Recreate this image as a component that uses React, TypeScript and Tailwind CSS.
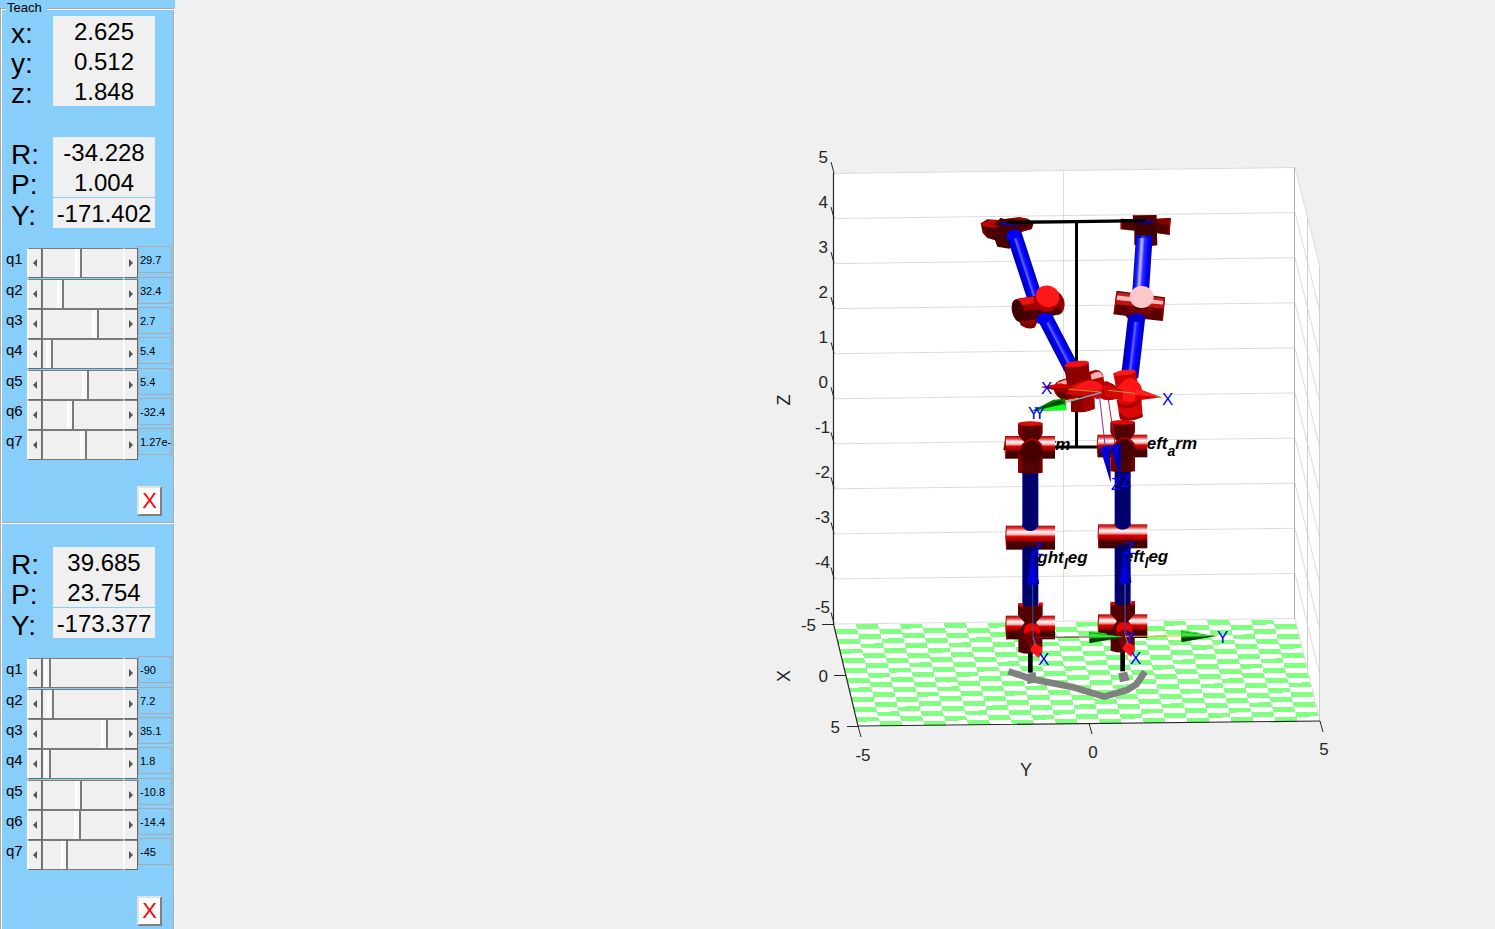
import React, { useState } from "react";

type Reading = { label: string; value: string; gap?: boolean };
type Joint = { name: string; thumb: number; value: string; gap?: boolean };

const POSITION: Reading[] = [
  { label: "x:", value: "2.625" },
  { label: "y:", value: "0.512" },
  { label: "z:", value: "1.848" },
];
const ORIENTATION_A: Reading[] = [
  { label: "R:", value: "-34.228" },
  { label: "P:", value: "1.004" },
  { label: "Y:", value: "-171.402", gap: true },
];
const ORIENTATION_B: Reading[] = [
  { label: "R:", value: "39.685" },
  { label: "P:", value: "23.754" },
  { label: "Y:", value: "-173.377", gap: true },
];
const JOINTS_A: Joint[] = [
  { name: "q1", thumb: 32, value: "29.7" },
  { name: "q2", thumb: 14, value: "32.4", gap: true },
  { name: "q3", thumb: 49, value: "2.7" },
  { name: "q4", thumb: 3, value: "5.4" },
  { name: "q5", thumb: 39, value: "5.4", gap: true },
  { name: "q6", thumb: 24, value: "-32.4" },
  { name: "q7", thumb: 37, value: "1.27e-" },
];
const JOINTS_B: Joint[] = [
  { name: "q1", thumb: 1, value: "-90" },
  { name: "q2", thumb: 4, value: "7.2", gap: true },
  { name: "q3", thumb: 58, value: "35.1" },
  { name: "q4", thumb: 1, value: "1.8" },
  { name: "q5", thumb: 32, value: "-10.8", gap: true },
  { name: "q6", thumb: 31, value: "-14.4" },
  { name: "q7", thumb: 18, value: "-45" },
];

function Readings({ rows, id }: { rows: Reading[]; id: string }) {
  return (
    <div className="pl-[10px]">
      {rows.map((r) => (
        <div key={r.label} className={r.gap ? "flex h-[31px] pt-px" : "flex h-[30px]"}>
          <label htmlFor={id + r.label} className="w-[42px] pt-[3px] text-[28px] leading-[30px]">
            {r.label}
          </label>
          <output
            id={id + r.label}
            className="h-[30px] w-[102px] bg-[#f0f0f0] text-center text-[24px] leading-[32px] whitespace-nowrap"
          >
            {r.value}
          </output>
        </div>
      ))}
    </div>
  );
}

const STEP_BUTTON =
  "flex h-full w-[15px] items-center justify-center border-t border-r border-b border-l-2 border-t-[#808080] border-r-[#696969] border-b-[#696969] border-l-[#fbfbfb] bg-[#f0f0f0] pr-px pb-px";

function JointRow({ joint, id }: { joint: Joint; id: string }) {
  const [pos, setPos] = useState(joint.thumb);
  return (
    <div className={joint.gap ? "flex h-[31px] items-start pt-px" : "flex h-[30px] items-start"}>
      <label htmlFor={id} className="w-[26px] pl-[5px] text-[15px] leading-[26px]">
        {joint.name}
      </label>
      <div className="mt-0.5 flex h-[30px] w-[111px] shrink-0 bg-[#f0f0f0]">
        <button type="button" aria-label={joint.name + " down"} className={STEP_BUTTON} onClick={() => setPos(Math.max(0, pos - 1))}>
          <svg viewBox="0 0 4 8" className="h-2 w-1 shrink-0" aria-hidden="true">
            <path d="M4 0v8L0 4z" fill="#555" />
          </svg>
        </button>
        <input
          id={id}
          type="range"
          min={0}
          max={73}
          value={pos}
          onChange={(e) => setPos(Number(e.target.value))}
          className="m-0 h-[30px] min-w-0 flex-1 appearance-none border-y border-l border-[#7a7a7a] bg-[#f0f0f0] outline-none [&::-webkit-slider-thumb]:h-7 [&::-webkit-slider-thumb]:w-[7px] [&::-webkit-slider-thumb]:appearance-none [&::-webkit-slider-thumb]:border-r-2 [&::-webkit-slider-thumb]:border-l-2 [&::-webkit-slider-thumb]:border-l-white [&::-webkit-slider-thumb]:border-r-[#7a7a7a] [&::-webkit-slider-thumb]:bg-[#f7f7f7]"
        />
        <button type="button" aria-label={joint.name + " up"} className={STEP_BUTTON} onClick={() => setPos(Math.min(73, pos + 1))}>
          <svg viewBox="0 0 4 8" className="h-2 w-1 shrink-0" aria-hidden="true">
            <path d="M0 0v8l4-4z" fill="#555" />
          </svg>
        </button>
      </div>
      <input
        type="text"
        aria-label={joint.name + " value"}
        defaultValue={joint.value}
        className="h-[27px] w-[34px] border border-[#ababab] bg-transparent pl-px text-[11px] outline-none"
      />
    </div>
  );
}

function Joints({ joints, id }: { joints: Joint[]; id: string }) {
  return (
    <div>
      {joints.map((j) => (
        <JointRow key={j.name} joint={j} id={id + j.name} />
      ))}
    </div>
  );
}

function CloseButton() {
  return (
    <button
      type="button"
      className="ml-[136px] flex h-[30px] w-[25px] items-center justify-center border-2 border-t-[#e3e3e3] border-r-[#808080] border-b-[#808080] border-l-[#e3e3e3] bg-white text-[22px] leading-none text-[#f00]"
    >
      X
    </button>
  );
}

/* ---------- 3D plot ---------- */

const N = 21;
function floorPoint(u: number, v: number): string {
  const x = 834 + 461 * u + 24.5 * v;
  const y = 624.5 - 5.2 * u + 102 * v;
  return x.toFixed(1) + " " + y.toFixed(1);
}
function buildTiles(): string {
  let d = "";
  for (let r = 0; r < N; r++) {
    for (let c = 0; c < N; c++) {
      if ((r + c) % 2 === 0) continue;
      const [u0, u1, v0, v1] = [c / N, (c + 1) / N, r / N, (r + 1) / N];
      d += `M${floorPoint(u0, v0)}L${floorPoint(u1, v0)}L${floorPoint(u1, v1)}L${floorPoint(u0, v1)}Z`;
    }
  }
  return d;
}
const TILES = buildTiles();
const LEVELS = [5, 4, 3, 2, 1, 0, -1, -2, -3, -4, -5];

type TubeProps = { x1: number; y1: number; x2: number; y2: number; w: number; fill: string };
function Tube({ x1, y1, x2, y2, w, fill }: TubeProps) {
  const len = Math.hypot(x2 - x1, y2 - y1);
  const angle = (Math.atan2(y2 - y1, x2 - x1) * 180) / Math.PI;
  return <rect x={0} y={-w / 2} width={len} height={w} fill={fill} transform={`translate(${x1} ${y1}) rotate(${angle})`} />;
}

function Stops({ id, stops }: { id: string; stops: [number, string][] }) {
  return (
    <linearGradient id={id} x1="0" y1="0" x2="0" y2="1">
      {stops.map(([o, c]) => (
        <stop key={o} offset={o} stopColor={c} />
      ))}
    </linearGradient>
  );
}

function Leg({ dx, dy }: { dx: number; dy: number }) {
  return (
    <g transform={`translate(${dx} ${dy})`}>
      <path d="M121 455V518" stroke="#000" strokeWidth="14" />
      {/* shin and thigh */}
      <Tube x1={121} y1={130} x2={121} y2={330} w={48} fill="url(#navy)" />
      <Tube x1={121} y1={-85} x2={121} y2={80} w={48} fill="url(#navy)" />
      {/* hip */}
      <rect x="47" y="-192" width="148" height="68" fill="url(#redBar)" />
      <path d="M47-192q-5 34 0 68" stroke="#b00000" strokeWidth="3" fill="none" />
      <path d="M84-230V-200Q90-182 102-176V-160H140V-176Q152-182 158-200V-230Z" fill="url(#hipV)" />
      <path d="M84-138V-82Q121-76 158-82V-138Z" fill="url(#hipV)" />
      <ellipse cx="121" cy="-229" rx="37" ry="7" fill="#e00808" />
      <path d="M125-180Q92-174 92-145Q92-112 125-110Q158-112 158-145Q158-174 125-180Z" fill="#460000" />
      <path d="M93-158Q105-180 128-182Q150-178 157-158" stroke="#a80000" strokeWidth="5" fill="none" />
      {/* knee */}
      <rect x="48" y="77" width="147" height="72" fill="url(#redBar)" />
      <path d="M49 78q-4 35 1 70" stroke="#b00000" strokeWidth="3" fill="none" />
      <path d="M97 74h48v5q-8 14-24 14t-24-14z" fill="url(#navyFlat)" />
      <path d="M97 151q4-11 24-13t24 13z" fill="#00005e" />
      {/* ankle */}
      <rect x="48" y="347" width="147" height="71" fill="url(#redBar)" />
      <path d="M49 348q-4 35 1 70" stroke="#b00000" strokeWidth="3" fill="none" />
      <path d="M84 314Q121 325 158 312V345L138 368Q158 390 157 420V454Q121 468 85 456V420Q86 388 104 368L84 345Z" fill="#500000" />
      <path d="M84 309l14 1v12l-12-4zM146 308l12-1v10l-12 3z" fill="#e00000" />
      <path d="M102 392Q104 368 125 370Q148 370 151 392L148 402Q125 384 104 404Z" fill="#f00000" />
      <path d="M104 404Q125 385 148 402L154 438 122 448Q104 425 104 404Z" fill="#720000" />
      <path d="M120 450L132 430 155 440 157 458 145 474Z" fill="#ff1515" />
      <path d="M129 412L128 250" stroke="#20609c" strokeWidth="3" />
      <path d="M129 412L137 435" stroke="#38a0ce" strokeWidth="3" />
      <path d="M127 145L111 253Q129 258 147 251Z" fill="#0000dc" />
      <path d="M127 145L147 251 137 255Z" fill="#0000aa" />
    </g>
  );
}

function GreenCone({ dx, dy }: { dx: number; dy: number }) {
  return (
    <g transform={`translate(${dx} ${dy})`}>
      <path d="M297 395L402 411 299 429Z" fill="#10a010" />
      <path d="M298 400L402 411 299 412Z" fill="#42df42" />
      <path d="M298 416L402 411 299 429Z" fill="#003c00" />
      <path d="M298 395L350 402" stroke="#00ff00" strokeWidth="3" />
    </g>
  );
}

function RobotPlot() {
  return (
    <svg viewBox="175 0 1320 929" className="block w-full" role="img" aria-label="Robot pose plot" fontFamily="Liberation Sans, Arial, sans-serif">
      <defs>
        <Stops id="redBar" stops={[[0, "#b00000"], [0.12, "#e04040"], [0.25, "#fff4f4"], [0.36, "#f8c0c0"], [0.46, "#d80000"], [0.62, "#a00000"], [0.68, "#4c0000"], [1, "#3c0000"]]} />
        <Stops id="red" stops={[[0, "#e81010"], [0.4, "#ff1010"], [0.75, "#c80000"], [1, "#780000"]]} />
        <Stops id="blue" stops={[[0, "#0000b0"], [0.25, "#0000ff"], [0.42, "#2020ff"], [0.52, "#6a6aff"], [0.64, "#0000ff"], [1, "#0000a4"]]} />
        <Stops id="blueLit" stops={[[0, "#0000a8"], [0.2, "#0000ff"], [0.45, "#2a2aff"], [0.62, "#c0c0ff"], [0.8, "#2020ff"], [1, "#0000b8"]]} />
        <Stops id="navy" stops={[[0, "#000090"], [0.15, "#000066"], [0.5, "#000070"], [0.9, "#000066"], [1, "#0000a0"]]} />
        <linearGradient id="navyFlat">
          <stop offset="0" stopColor="#000090" />
          <stop offset="0.2" stopColor="#000068" />
          <stop offset="1" stopColor="#000078" />
        </linearGradient>
        <linearGradient id="hipV">
          <stop offset="0" stopColor="#8c0000" />
          <stop offset="0.25" stopColor="#560000" />
          <stop offset="0.8" stopColor="#500000" />
          <stop offset="1" stopColor="#880000" />
        </linearGradient>
      </defs>

      {/* walls and floor */}
      <path d="M834 173.500L1295 167.500 1320 267V721L858 726 834 624Z" fill="#fff" />
      <path d={TILES} fill="#80ff80" shapeRendering="crispEdges" />
      <g stroke="#dcdcdc" fill="none">
        {LEVELS.map((z, i) => (
          <path key={z} d={`M834 ${173.5 + 45.05 * i}L1295 ${167.5 + 45.1 * i}L1320 ${267 + 45.4 * i}`} />
        ))}
        <path d="M1063.500 170V622" />
        <path d="M1307.500 218V670M1319.500 267V721" stroke="#cfcfcf" />
        <path d="M1294.500 167V619" stroke="#b0b0b0" />
      </g>
      <g stroke="#262626" fill="none">
        <path d="M833.500 173V624L858 726 1320 721" strokeWidth="1.200" />
        {LEVELS.map((z, i) => (
          <path key={z} d={`M831 ${162 + 45.05 * i}l3 11`} />
        ))}
        <path d="M822 624.500h12M834 675.500h12M847 726.500h11M858 726l3 11M1089 723l3 11M1320 721l3 11" />
      </g>
      <g fill="#262626" fontSize="17" textAnchor="end">
        {LEVELS.map((z, i) => (
          <text key={z} x={z < 0 ? 830 : 828} y={163 + 45 * i}>{z}</text>
        ))}
        <text x="816" y="631">-5</text>
        <text x="828" y="682">0</text>
        <text x="840" y="733">5</text>
      </g>
      <g fill="#262626" fontSize="17" textAnchor="middle">
        <text x="863" y="761">-5</text>
        <text x="1093" y="758">0</text>
        <text x="1324" y="755">5</text>
        <text x="1026" y="776" fontSize="18">Y</text>
        <text transform="translate(790 676) rotate(-90)" fontSize="18">X</text>
        <text transform="translate(790 400) rotate(-90)" fontSize="18">Z</text>
      </g>

      {/* torso frame and limb names */}
      <path d="M1076.500 222V447M1030 447H1123" stroke="#000" strokeWidth="3" fill="none" />
      <g fontSize="17" fontWeight="bold" fontStyle="italic">
        <text x="1003" y="450">right<tspan dy="7" fontSize="14">a</tspan><tspan dy="-7">rm</tspan></text>
        <text x="1142" y="449">left<tspan dy="7" fontSize="14">a</tspan><tspan dy="-7">rm</tspan></text>
        <text x="1026" y="563">right<tspan dy="6" fontSize="14">l</tspan><tspan dy="-6">eg</tspan></text>
        <text x="1119" y="562">left<tspan dy="6" fontSize="14">l</tspan><tspan dy="-6">eg</tspan></text>
      </g>

      {/* legs */}
      <g transform="translate(990 500) scale(.3333)">
        <path d="M111 522l26-6 2 32-27 4z" fill="#808080" />
        <path d="M385 520l26-5 8 26-29 6z" fill="#808080" />
        <path d="M55 514L125 537 250 562 343 590 412 570 440 552 465 515" stroke="#808080" strokeWidth="20" fill="none" />
        <Leg dx={0} dy={0} />
        <path d="M130 412L300 411" stroke="#7c2034" strokeWidth="3" />
        <Leg dx={277} dy={-4} />
        <path d="M405 408V250" stroke="#643080" strokeWidth="3" />
        <GreenCone dx={0} dy={0} />
        <path d="M405 409L575 408M665 407h18" stroke="#f0b030" strokeWidth="3" />
        <GreenCone dx={276} dy={-3} />
      </g>

      {/* shoulders, upper arms and elbows */}
      <g transform="translate(960 200) scale(.3333)">
        <path d="M62 70L82 58 116 60 121 54 134 57 175 52 205 57 221 70 215 88 180 96 172 132 148 146 112 140 105 121 82 114 68 99Z" fill="#480000" />
        <path d="M62 70L90 60 116 60 97 75 119 77 104 83 68 79Z" fill="#c00505" />
        <path d="M140 57L182 52 205 57 193 61Z" fill="#a00000" />
        <path d="M70 82Q74 104 88 112M182 94L216 82" stroke="#780000" strokeWidth="6" fill="none" />
        <ellipse cx="150" cy="71" rx="30" ry="5" fill="#0000d0" />
        <path d="M482 56L519 58 518 46 590 45V56L632 54 629 105 591 100 592 136 570 139 523 135V92L482 88Z" fill="#500000" />
        <path d="M592 57L632 54 630 76 592 70Z" fill="#850000" />
        <path d="M630 56L627 104M484 57V88" stroke="#a80000" strokeWidth="4" />
        <path d="M520 66H590L586 98Q555 125 528 99Z" fill="#3b0000" />
        <ellipse cx="555" cy="66" rx="26" ry="4" fill="#0000d8" />
        <path d="M141 67L349 65 555 62" stroke="#000" strokeWidth="10" fill="none" />
        <Tube x1={162} y1={102} x2={225} y2={295} w={46} fill="url(#blue)" />
        <path d="M139 110Q142 90 160 88Q178 89 184 96L176 112 141 122Z" fill="#0000f4" />
        <Tube x1={553} y1={108} x2={541} y2={290} w={50} fill="url(#blueLit)" />
        <path d="M530 101Q552 118 576 103V112L530 114Z" fill="#0000cf" />
        {/* right elbow */}
        <path d="M157 310Q162 297 180 295L283 278Q314 280 314 315Q312 338 300 343L238 353 225 382Q204 390 185 374L164 350Z" fill="#a00000" />
        <path d="M166 298L222 291 224 309 172 317Z" fill="#ed1515" />
        <path d="M185 334L305 322 299 343 190 365Z" fill="#480000" />
        <ellipse cx="174" cy="332" rx="18" ry="34" transform="rotate(-12 174 332)" fill="#410000" />
        <path d="M180 366Q204 378 231 363L222 383Q202 390 182 376Z" fill="#790000" />
        <path d="M218 301L242 331Q263 345 292 322L298 282 278 267Z" fill="#a90000" />
        <path d="M284 272Q310 276 312 314L296 325Z" fill="#8c0000" />
        <ellipse cx="263" cy="289" rx="36" ry="32" transform="rotate(20 263 289)" fill="#ff1818" />
        <Tube x1={254} y1={350} x2={338} y2={512} w={46} fill="url(#blue)" />
        <path d="M229 362Q230 343 252 340Q270 340 276 348L262 368 234 371Z" fill="#0000f4" />
        {/* left elbow */}
        <path d="M470 272L615 292 608 363 553 357Q541 372 512 364L496 347 461 343Z" fill="#590000" />
        <path d="M469 276L612 295 611 306 467 289Z" fill="#c02020" />
        <path d="M468 286L611 303 610 315 466 301Z" fill="#f4b8b8" />
        <path d="M467 300L611 314 609 326 465 313Z" fill="#c81010" />
        <path d="M471 277L462 343M613 295L607 361" stroke="#a00000" strokeWidth="4" />
        <path d="M506 318Q535 338 582 320L574 342H505Z" fill="#7a0000" />
        <Tube x1={530} y1={350} x2={509} y2={532} w={52} fill="url(#blue)" />
        <path d="M504 352Q510 340 532 340Q552 342 557 356L550 366H504Z" fill="#0000c8" />
        <ellipse cx="545" cy="291" rx="36" ry="33" fill="#ffc8c8" />
      </g>

      {/* wrists and tool frames */}
      <g transform="translate(1000 340) scale(.3333)">
        <path d="M160 146Q163 124 190 118L288 89Q313 92 312 123L322 132 290 170 195 181Q166 174 160 146Z" fill="#b00000" />
        <path d="M172 128L198 119 206 131 176 138ZM272 104Q290 90 303 98L310 110 275 119Z" fill="#f9b0b0" />
        <path d="M165 144Q188 160 216 144L218 171 190 180Q167 172 165 144Z" fill="#680000" />
        <path d="M193 75L266 68 270 126 201 136Z" fill="#8c0000" />
        <path d="M212 152L282 150 284 206Q250 222 213 215Z" fill="#850000" />
        <path d="M244 156h38l2 50-32 10z" fill="#a80000" />
        <ellipse cx="230" cy="72" rx="37" ry="9" transform="rotate(-7 230 72)" fill="#f01010" />
        <path d="M200 147Q242 119 276 121Q305 127 318 148Q314 170 293 178Q270 164 220 167L198 160Z" fill="#d80505" />
        <path d="M209 148L265 121Q300 123 314 146L290 152Z" fill="#ff1515" />
        <path d="M318 122Q338 130 348 139L355 174Q324 188 300 174L309 136Z" fill="#c00000" />
        <path d="M340 100L408 92 415 150 350 154Z" fill="#c80404" />
        <path d="M350 180L423 160 428 229Q392 248 360 238Z" fill="#d90606" />
        <path d="M356 212L361 238Q392 248 428 231V223Q392 240 370 228Z" fill="#9a0000" />
        <ellipse cx="373" cy="98" rx="34" ry="8" transform="rotate(-8 373 98)" fill="#ff1717" />
        <path d="M354 188Q382 205 423 177L424 187Q392 214 355 201Z" fill="#a80000" />
        <path d="M362 133Q370 117 394 114Q423 126 426 148L422 168Q397 194 367 182L326 169Z" fill="#ff1515" />
        <path d="M310 135L370 150 367 182 315 169Z" fill="#d40808" />
        <path d="M407 143L483 172 406 182Z" fill="#d00000" />
        <path d="M407 144L483 172 406 165Z" fill="#ff2020" />
        <path d="M122 141L181 130 206 136 204 159Z" fill="#d80000" />
        <path d="M122 141L206 146 204 158Z" fill="#8e0000" />
        <path d="M206 148L302 156M325 151L405 160M468 171h17" stroke="#a5a02c" strokeWidth="3" />
        <path d="M198 187L305 157" stroke="#65bada" strokeWidth="4" />
        <path d="M198 183L235 174M85 217L106 209" stroke="#f0b030" strokeWidth="3" />
        <path d="M95 213L160 179 196 176 199 210Z" fill="#008600" />
        <path d="M95 213L196 193 199 211Z" fill="#10ff25" />
        <path d="M96 213L178 181 194 188Z" fill="#004600" />
        <path d="M298 164L316 322" stroke="#78309a" strokeWidth="3" />
        <path d="M324 172L346 315" stroke="#a02040" strokeWidth="3" />
        <path d="M300 323L329 315 332 428Z" fill="#0000e0" />
        <path d="M329 315L332 428 323 383Z" fill="#0000a0" />
        <path d="M330 318L363 310 362 415Z" fill="#0000c8" />
        <path d="M363 310L362 415 353 380Z" fill="#00009a" />
      </g>

      <g fill="#0000ff" fontSize="17">
        <text x="1041" y="394">X</text>
        <text x="1162" y="405">X</text>
        <text x="1028" y="419">Y</text>
        <text x="1034" y="419">Y</text>
        <text x="1111" y="490">Z</text>
        <text x="1121" y="487">Z</text>
        <text x="1033" y="555">Z</text>
        <text x="1125" y="554">Z</text>
        <text x="1038" y="665">X</text>
        <text x="1130" y="664">X</text>
        <text x="1125" y="643">Y</text>
        <text x="1217" y="643">Y</text>
      </g>
    </svg>
  );
}

export default function App() {
  return (
    <div className="flex min-h-screen items-stretch bg-[#f0f0f0] font-['Liberation_Sans',Arial,sans-serif] text-black">
      <aside className="flex w-[175px] shrink-0 flex-col bg-[#87cefa]">
        <fieldset className="m-0 min-w-0 border border-[#a9a9a9] border-r-white border-b-white p-0 shadow-[inset_1px_1px_#fff,inset_-1px_-1px_#a9a9a9]">
          <legend className="ml-[5px] bg-[#87cefa] px-px pr-[5px] text-[13px] leading-4">Teach</legend>
          <Readings rows={POSITION} id="pos-" />
          <div className="mt-[31px]">
            <Readings rows={ORIENTATION_A} id="a-" />
          </div>
          <div className="mt-[18px]">
            <Joints joints={JOINTS_A} id="a-" />
          </div>
          <div className="pt-7 pb-[7px]">
            <CloseButton />
          </div>
        </fieldset>
        <section
          aria-label="Second arm"
          className="flex-1 border-r border-l border-r-white border-l-[#a9a9a9] shadow-[inset_1px_0_#fff,inset_-1px_0_#a9a9a9]"
        >
          <div className="pt-[23px]">
            <Readings rows={ORIENTATION_B} id="b-" />
          </div>
          <div className="mt-[18px]">
            <Joints joints={JOINTS_B} id="b-" />
          </div>
          <div className="pt-7 pb-[3px]">
            <CloseButton />
          </div>
        </section>
      </aside>
      <main className="min-w-0 flex-1">
        <RobotPlot />
      </main>
    </div>
  );
}
